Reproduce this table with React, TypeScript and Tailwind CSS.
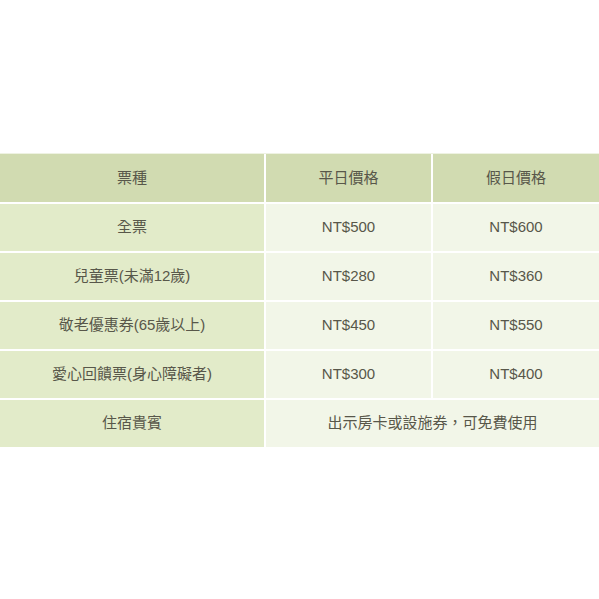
const HEAD = ["票種", "平日價格", "假日價格"];

const ROWS: [string, string, string][] = [
  ["全票", "NT$500", "NT$600"],
  ["兒童票(未滿12歲)", "NT$280", "NT$360"],
  ["敬老優惠券(65歲以上)", "NT$450", "NT$550"],
  ["愛心回饋票(身心障礙者)", "NT$300", "NT$400"],
];

const font = "font-['Liberation_Sans','Noto_Sans_CJK_TC',sans-serif]";

export default function App() {
  return (
    <div className={`min-h-[599px] bg-white pt-[153px] ${font} text-[15px] text-[#58574a]`}>
      <div className="border-t border-[#eef2e2] grid grid-cols-[264px_165px_1fr] gap-[2px] bg-white">
        {HEAD.map((h) => (
          <div key={h} className="h-[48px] flex items-center justify-center bg-[#d1dbb1]">
            {h}
          </div>
        ))}
        {ROWS.map(([name, weekday, holiday]) => (
          <div key={name} className="contents">
            <div className="h-[47px] flex items-center justify-center bg-[#e2ebc9]">{name}</div>
            <div className="h-[47px] flex items-center justify-center bg-[#f2f6e8]">{weekday}</div>
            <div className="h-[47px] flex items-center justify-center bg-[#f2f6e8]">{holiday}</div>
          </div>
        ))}
        <div className="h-[47px] flex items-center justify-center bg-[#e2ebc9]">住宿貴賓</div>
        <div className="col-span-2 h-[47px] flex items-center justify-center bg-[#f2f6e8]">
          出示房卡或設施券，可免費使用
        </div>
      </div>
    </div>
  );
}
